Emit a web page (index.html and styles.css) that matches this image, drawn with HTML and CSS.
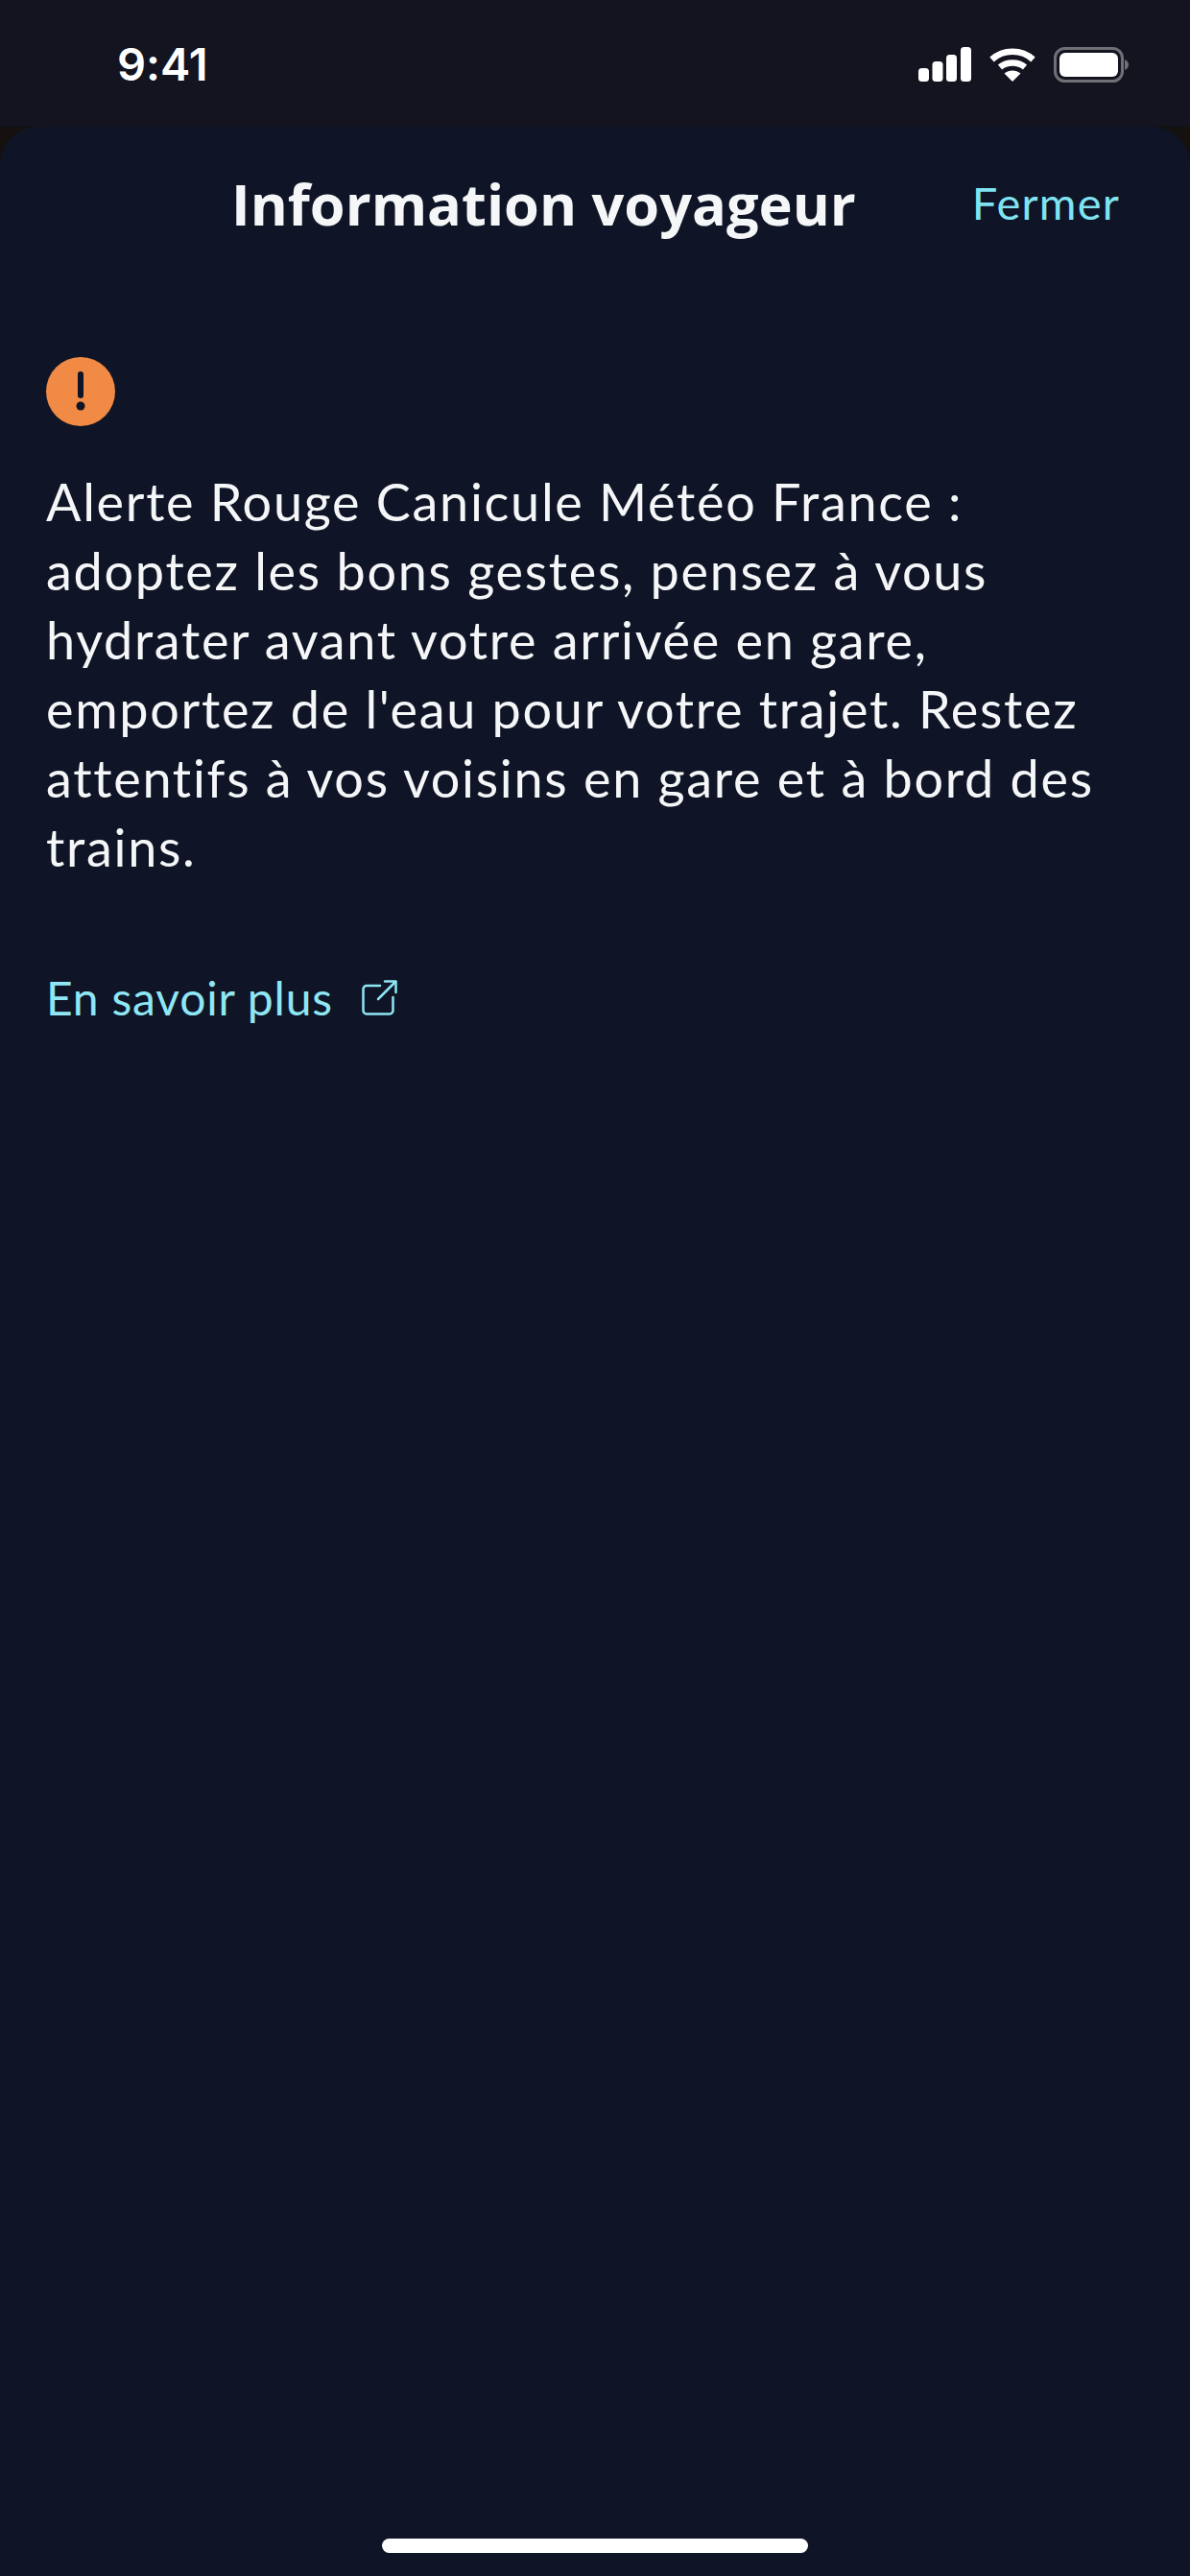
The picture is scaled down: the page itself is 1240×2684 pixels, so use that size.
FILE: index.html
```html
<!DOCTYPE html>
<html lang="fr">
<head>
  <meta charset="UTF-8">
  <title>Information voyageur</title>
  <link rel="stylesheet" href="styles.css">
</head>
<body>
  <div class="status-bar">
    <span class="time">9:41</span>
    <div class="status-icons">
      <svg width="55" height="36" viewBox="0 0 55 36">
        <rect x="0" y="22" width="11" height="14" rx="3.500" fill="#fff"/>
        <rect x="14.500" y="15" width="11" height="21" rx="3.500" fill="#fff"/>
        <rect x="29" y="8" width="11" height="28" rx="3.500" fill="#fff"/>
        <rect x="44" y="0" width="11" height="36" rx="3.500" fill="#fff"/>
      </svg>
      <svg width="48" height="36" viewBox="0 0 48 36">
        <path d="M2.500 13 C14.500 2 33.500 2 45.500 13" fill="none" stroke="#fff" stroke-width="6.500"/>
        <path d="M11 21 C18 15 30 15 37 21" fill="none" stroke="#fff" stroke-width="6.500"/>
        <path d="M15.500 27.500 C20.500 23.500 27.500 23.500 32.500 27.500 L24 36 Z" fill="#fff"/>
      </svg>
      <svg width="78" height="37" viewBox="0 0 78 37">
        <rect x="1.500" y="1.500" width="70" height="34" rx="10" fill="none" stroke="#6f7076" stroke-width="3"/>
        <rect x="6" y="6" width="61" height="25" rx="6" fill="#fff"/>
        <path d="M74 13 C76.500 14 78 16 78 18.500 C78 21 76.500 23 74 24 Z" fill="#6f7076"/>
      </svg>
    </div>
  </div>

  <div class="sheet-wrap">
    <div class="sheet">
      <div class="sheet-header">
        <h1>Information voyageur</h1>
        <a class="close-link">Fermer</a>
      </div>

      <div class="sheet-content">
        <div class="alert-icon">
          <svg width="72" height="72" viewBox="0 0 72 72">
            <circle cx="36" cy="36" r="36" fill="#f08a45"/>
            <rect x="33" y="15" width="6" height="28" rx="3" fill="#0f1526"/>
            <circle cx="36" cy="51" r="4.500" fill="#0f1526"/>
          </svg>
        </div>
        <p class="alert-text">Alerte Rouge Canicule Météo France :<br>adoptez les bons gestes, pensez à vous<br>hydrater avant votre arrivée en gare,<br>emportez de l'eau pour votre trajet. Restez<br>attentifs à vos voisins en gare et à bord des<br>trains.</p>
        <a class="more-link">
          <span>En savoir plus</span>
          <svg width="37" height="37" viewBox="0 0 37 37" fill="none" stroke="#8fe6f5" stroke-width="2.500" stroke-linecap="round" stroke-linejoin="round">
            <path d="M19 6 H5 A3.500 3.500 0 0 0 1.500 9.500 V32 A3.500 3.500 0 0 0 5 35.500 H29 A3.500 3.500 0 0 0 32.500 32 V18"/>
            <path d="M17 20 L35 2"/>
            <path d="M24 1.500 H35.500 V13"/>
          </svg>
        </a>
      </div>

      <div class="home-bar"></div>
    </div>
  </div>
</body>
</html>
```

FILE: styles.css
```css
* {
  box-sizing: border-box;
}

body {
  margin: 0;
  height: 2684px;
  background: #13141f;
  font-family: Lato, "Open Sans", sans-serif;
  font-variant-ligatures: none;
  display: flex;
  flex-direction: column;
  overflow: hidden;
}

.status-bar {
  height: 132px;
  flex-shrink: 0;
  padding: 0 64px 0 122px;
  display: flex;
  justify-content: space-between;
  align-items: flex-start;
}

.time {
  font-family: Inter, sans-serif;
  font-weight: 600;
  font-size: 47px;
  line-height: 46px;
  color: #fff;
  margin-top: 44px;
}

.status-icons {
  display: flex;
  align-items: flex-start;
  gap: 19px;
  margin-top: 49px;
}

.sheet-wrap {
  flex-grow: 1;
  display: flex;
  background: #14110f;
}

.sheet {
  flex-grow: 1;
  background: #0f1526;
  border-radius: 40px 40px 0 0;
  display: flex;
  flex-direction: column;
}

.sheet-header {
  height: 158px;
  padding: 0 73px 0 241px;
  display: flex;
  align-items: center;
  justify-content: space-between;
}

.sheet-header h1 {
  margin: 0;
  font-family: "Open Sans", sans-serif;
  font-size: 59.500px;
  font-weight: 700;
  color: #f5f6f8;
}

.close-link {
  font-size: 47px;
  letter-spacing: 1.200px;
  color: #7fe3f2;
}

.sheet-content {
  flex-grow: 1;
  padding: 82px 48px 0 48px;
}

.alert-icon {
  height: 72px;
}

.alert-icon svg {
  display: block;
}

.alert-text {
  margin: 43px 0 0;
  font-size: 54px;
  letter-spacing: 1.700px;
  line-height: 72px;
  color: #f5f6f8;
}

.more-link {
  margin-top: 92px;
  display: flex;
  align-items: center;
  gap: 30px;
  font-size: 48px;
  letter-spacing: 0.800px;
  color: #8fe6f5;
}

.home-bar {
  width: 444px;
  height: 15px;
  margin: 0 auto 24px;
  background: #fff;
  border-radius: 8px;
}
```
